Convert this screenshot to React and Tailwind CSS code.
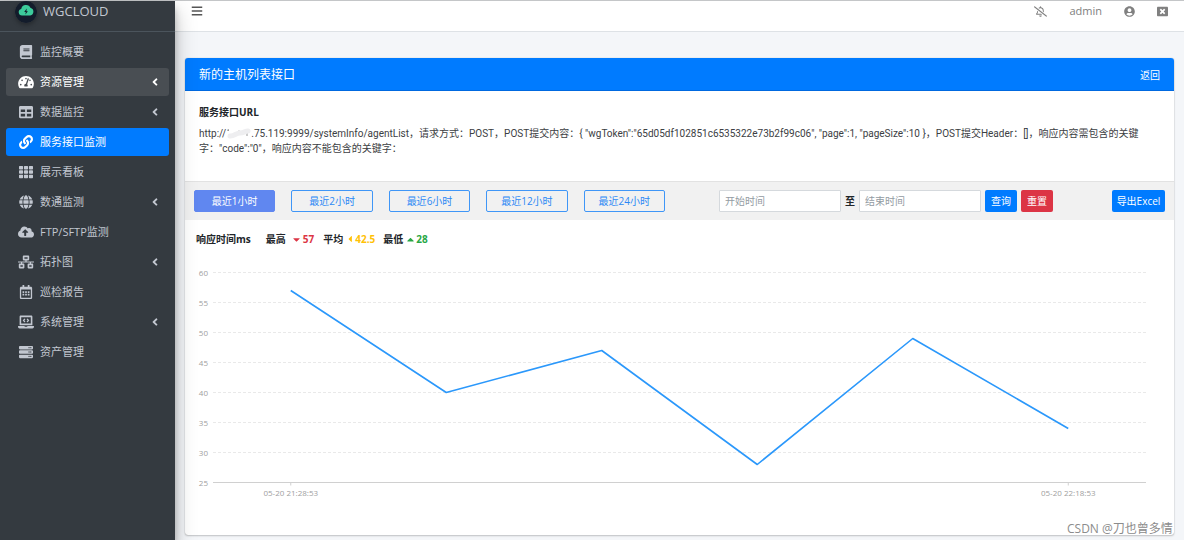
import { useState } from "react";
import {
  FaBook,
  FaTachometerAlt,
  FaTable,
  FaLink,
  FaTh,
  FaGlobe,
  FaCloudUploadAlt,
  FaNetworkWired,
  FaRegCalendarAlt,
  FaLaptopCode,
  FaServer,
  FaAngleLeft,
  FaBars,
  FaRegBellSlash,
  FaUserCircle,
  FaWindowClose,
  FaCaretDown,
  FaCaretLeft,
  FaCaretUp,
} from "react-icons/fa";

const menu = [
  { label: "监控概要", icon: FaBook },
  { label: "资源管理", icon: FaTachometerAlt, sub: true, open: true },
  { label: "数据监控", icon: FaTable, sub: true },
  { label: "服务接口监测", icon: FaLink, active: true },
  { label: "展示看板", icon: FaTh },
  { label: "数通监测", icon: FaGlobe, sub: true },
  { label: "FTP/SFTP监测", icon: FaCloudUploadAlt },
  { label: "拓扑图", icon: FaNetworkWired, sub: true },
  { label: "巡检报告", icon: FaRegCalendarAlt },
  { label: "系统管理", icon: FaLaptopCode, sub: true },
  { label: "资产管理", icon: FaServer },
];

const ranges = [1, 2, 6, 12, 24];
const values = [57, 40, 47, 28, 49, 34];
const ticks = [60, 55, 50, 45, 40, 35, 30, 25];

function App() {
  return (
    <div className="flex min-h-screen bg-[#f4f6f9] border-t border-[#c4c6c8] text-[#212529] font-['Open_Sans','Noto_Sans_CJK_SC',sans-serif]">
      <Sidebar />
      <div className="flex-1 min-w-0 flex flex-col">
        <Navbar />
        <main className="pt-[26px] px-[10px] pb-1">
          <Card />
        </main>
      </div>
    </div>
  );
}

export default App;

const Sidebar = () => (
  <aside className="relative z-10 w-[175px] shrink-0 bg-[#343a40] shadow-[0_10px_20px_rgba(0,0,0,0.25),0_7px_7px_rgba(0,0,0,0.22)]">
    <a
      href="#home"
      className="h-[31px] pb-2 pl-[15px] flex items-center gap-[6px] border-b border-[#4b545c] text-[#c2c7d0] text-[13px]"
    >
      <Logo />
      <span>WGCLOUD</span>
    </a>
    <nav className="mt-[6px] px-[6px] flex flex-col gap-[2px]">
      {menu.map(({ label, icon: Icon, sub, open, active }) => (
        <a
          key={label}
          href="#menu"
          className={
            "h-7 pl-3 pr-2 flex items-center rounded-[3px] text-[11px] " +
            (active
              ? "bg-[#007bff] text-white"
              : open
              ? "bg-[#494e53] text-white"
              : "text-[#c2c7d0]")
          }
        >
          <Icon className="w-4 h-[14px] shrink-0" />
          <span className="flex-1 pl-[6px]">{label}</span>
          {sub && <FaAngleLeft className="text-xs" />}
        </a>
      ))}
    </nav>
  </aside>
);

const Logo = () => (
  <svg
    viewBox="0 0 22 22"
    className="w-[22px] h-[22px] shrink-0 rounded-full shadow-[0_2px_4px_rgba(0,0,0,0.3)]"
  >
    <circle cx="11" cy="11" r="11" fill="#131c2b" />
    <path
      d="M7 14.4a3.3 3.3 0 0 1-.8-6.5A5 5 0 0 1 15.6 7a3.8 3.8 0 0 1-.3 7.4z"
      fill="#3ccb9b"
    />
    <path d="M11.8 7.6 9.2 11h1.6l-.4 2.6 2.5-3.4h-1.5z" fill="#131c2b" />
  </svg>
);

const Navbar = () => (
  <header className="h-[31px] pb-[10px] px-4 flex items-center justify-between bg-white border-b border-[#dee2e6] text-[#808080]">
    <button aria-label="menu" className="text-[#555]">
      <FaBars className="text-xs" />
    </button>
    <div className="flex items-center text-[11px]">
      <button aria-label="mute">
        <FaRegBellSlash className="text-[13px]" />
      </button>
      <span className="ml-[22px]">admin</span>
      <button aria-label="account" className="ml-[22px]">
        <FaUserCircle className="text-[11px]" />
      </button>
      <button aria-label="close" className="ml-[22px]">
        <FaWindowClose className="text-[11px]" />
      </button>
    </div>
  </header>
);

const Card = () => (
  <section className="bg-white rounded-[3px] shadow-[0_0_1px_rgba(0,0,0,0.3),0_1px_2px_rgba(0,0,0,0.2)]">
    <div className="h-[33px] pt-[2px] px-[14px] flex items-center justify-between rounded-t-[3px] bg-[#007bff] border-b border-[#0069e0] text-white">
      <h3 className="text-xs">新的主机列表接口</h3>
      <a href="#back" className="text-[10px]">
        返回
      </a>
    </div>
    <div className="h-[90px] px-[14px] pt-[14px] text-[10px] leading-[15px]">
      <h4 className="font-bold mb-[6px]">服务接口URL</h4>
      <p className="pr-5 text-[#3c4043] font-[Roboto,'Noto_Sans_CJK_SC',sans-serif]">
        http://
        <Smudge />
        .75.119:9999/systemInfo/agentList，请求方式：POST，POST提交内容：&#123;
        "wgToken":"65d05df102851c6535322e73b2f99c06", "page":1, "pageSize":10
        &#125;，POST提交Header：[]，响应内容需包含的关键字："code":"0"，响应内容不能包含的关键字：
      </p>
    </div>
    <Toolbar />
    <Stats />
    <Chart />
  </section>
);

// masked part of the host address
const Smudge = () => (
  <svg viewBox="0 0 25 12" className="inline-block w-[25px] h-3 align-[-2px]">
    <path d="M1 3.5 2.5 2.5V4M13 5V3.5M21 9V5" stroke="#999" fill="none" />
    <path
      d="M4 9C8 9.5 10 6 14 6s5-2 8-2"
      stroke="#eeeef0"
      strokeWidth="5"
      strokeLinecap="round"
      fill="none"
    />
  </svg>
);

const Toolbar = () => {
  const [range, setRange] = useState(1);
  const input =
    "w-[122px] h-[22px] px-[5px] bg-white border border-[#d5d9dd] rounded-[1px] placeholder:text-[#939ba2]";

  return (
    <div className="h-[39px] px-[9px] flex items-center bg-[#f1f1f1] border-t border-[#e2e2e2] text-[10px]">
      <div className="grid grid-cols-5 gap-4 w-[471px]">
        {ranges.map((hours) => (
          <button
            key={hours}
            onClick={() => setRange(hours)}
            className={
              "h-[22px] border rounded-[2px] " +
              (range === hours
                ? "bg-[#6087f0] border-[#6087f0] text-white"
                : "border-[#3f96f7] text-[#2b88f5]")
            }
          >
            最近{hours}小时
          </button>
        ))}
      </div>
      <div className="ml-[54px] flex items-center gap-1">
        <input aria-label="开始时间" placeholder="开始时间" className={input} />
        <label htmlFor="end" className="font-bold">
          至
        </label>
        <input id="end" placeholder="结束时间" className={input} />
        <button className="w-8 h-[22px] rounded-[2px] bg-[#007bff] text-white">
          查询
        </button>
        <button className="w-8 h-[22px] rounded-[2px] bg-[#dc3545] text-white">
          重置
        </button>
      </div>
      <button className="ml-auto w-[53px] h-[22px] rounded-[2px] bg-[#007bff] text-white">
        导出Excel
      </button>
    </div>
  );
};

const Stats = () => (
  <div className="h-[38px] pl-[11px] flex items-center text-[10px] font-bold">
    <span className="mr-[15px]">响应时间ms</span>
    <span>最高</span>
    <span className="ml-[5px] mr-[9px] flex items-center gap-[1px] text-[#dc3545]">
      <FaCaretDown className="text-[11px]" />
      57
    </span>
    <span>平均</span>
    <span className="ml-[2px] mr-2 flex items-center text-[#ffc107]">
      <FaCaretLeft className="text-[10px]" />
      42.5
    </span>
    <span>最低</span>
    <span className="ml-[2px] flex items-center text-[#28a745]">
      <FaCaretUp className="text-[11px]" />
      28
    </span>
  </div>
);

const Chart = () => {
  const left = 28;
  const right = 961;
  const step = (right - left) / values.length;
  const x = (i) => left + step * (i + 0.5);
  const y = (v) => 224.5 - (v - 25) * 6;

  return (
    <svg
      viewBox="0 0 989 277"
      className="block w-full overflow-visible"
      fontSize="8"
    >
      {ticks.map((t) => (
        <g key={t}>
          <text x={left - 5} y={y(t) + 3} textAnchor="end" fill="#a0a0a0">
            {t}
          </text>
          <line
            x1={left}
            x2={right}
            y1={y(t)}
            y2={y(t)}
            stroke={t === 25 ? "#d0d0d0" : "#e9e9e9"}
            strokeDasharray={t === 25 ? undefined : "3 2"}
          />
        </g>
      ))}
      {[
        [0, "05-20 21:28:53"],
        [5, "05-20 22:18:53"],
      ].map(([i, label]) => (
        <g key={label}>
          <line x1={x(i)} x2={x(i)} y1={y(25)} y2={y(25) + 3} stroke="#d0d0d0" />
          <text x={x(i)} y={y(25) + 13} textAnchor="middle" fill="#a0a0a0">
            {label}
          </text>
        </g>
      ))}
      <polyline
        points={values.map((v, i) => x(i) + "," + y(v)).join(" ")}
        fill="none"
        stroke="#2b98fb"
        strokeWidth="1.6"
        strokeLinejoin="round"
      />
      <text x="882" y="275" fontSize="12" fill="#8c8c8c">
        CSDN @刀也曾多情
      </text>
    </svg>
  );
};
